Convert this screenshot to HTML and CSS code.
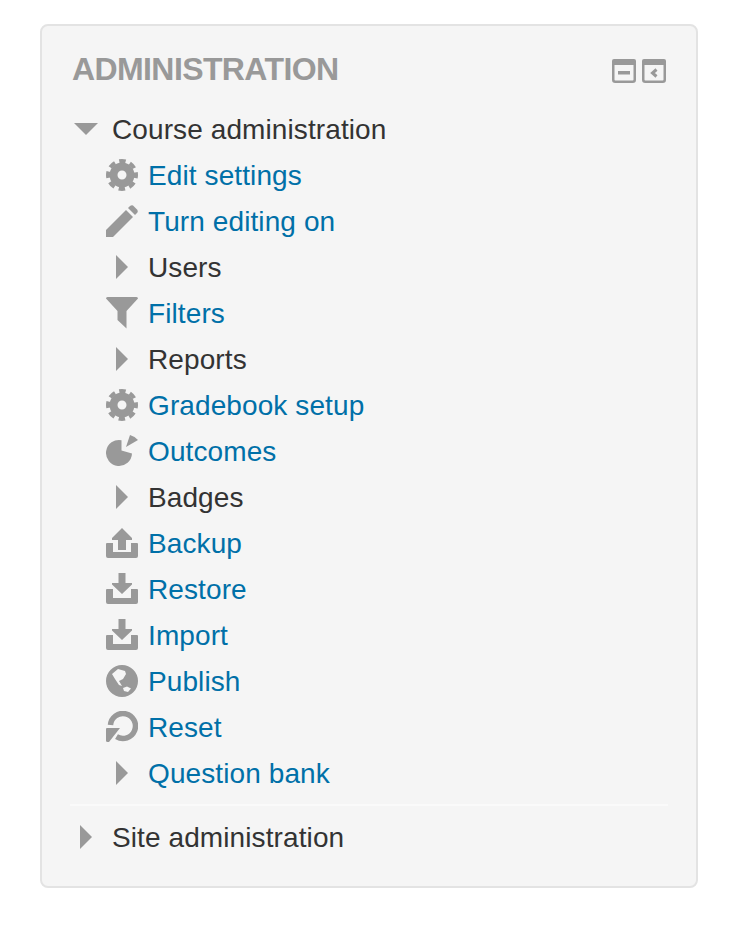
FILE: index.html
```html
<!DOCTYPE html>
<html lang="en">
<head>
    <meta charset="UTF-8">
    <meta name="viewport" content="width=device-width, initial-scale=1.0">
    <title>Administration</title>
    <link rel="stylesheet" href="styles.css">
</head>
<body>
    <svg class="defs">
        <symbol id="i-gear" viewBox="0 0 32 32">
            <circle cx="16" cy="16" r="8.500" fill="none" stroke="currentColor" stroke-width="8"/>
            <circle cx="16" cy="16" r="14" fill="none" stroke="currentColor" stroke-width="4" stroke-dasharray="6.500 4.500" stroke-dashoffset="3.250"/>
        </symbol>
        <symbol id="i-pencil" viewBox="0 0 32 32">
            <path d="M0 32V25L20 5 27 12 7 32Z"/>
            <path d="M22 3 24 1Q25.500 0 27 0.500L31 4.500Q32.500 6.500 31 8L29 10Z"/>
        </symbol>
        <symbol id="i-filter" viewBox="0 0 32 32">
            <path d="M0 1.500Q0 0 1.500 0H30.500Q32 0 32 1.500L20.500 14V31.500L11.500 23V14Z"/>
        </symbol>
        <symbol id="i-pie" viewBox="0 0 32 32">
            <path d="M15.500 5.200A13 13 0 1 0 26 18.500L15.500 15.500Z"/>
            <path d="M24 0Q29 1.500 32 5L20 12Z"/>
        </symbol>
        <symbol id="i-upload" viewBox="0 0 32 32">
            <path d="M16 1 26 11V13H20V23H12V13H6V11Z"/>
            <path d="M1 16H7V25H25V16H31Q32 16 32 17V29Q32 31 30 31H2Q0 31 0 29V17Q0 16 1 16Z"/>
        </symbol>
        <symbol id="i-download" viewBox="0 0 32 32">
            <path d="M12.500 0H19.500V10H26V11.500L16 21 6 11.500V10H12.500Z"/>
            <path d="M1 16H7V25H25V16H31Q32 16 32 17V29Q32 31 30 31H2Q0 31 0 29V17Q0 16 1 16Z"/>
        </symbol>
        <symbol id="i-globe" viewBox="0 0 32 32">
            <path fill-rule="evenodd" d="M16 0A16 16 0 1 1 16 32 16 16 0 1 1 16 0ZM6 9 12 4 19 6 20 9 17 14 13 16 16 21 13 20 9 14ZM17 23 21 21.500 25 23.500 22 27 18 26Z"/>
        </symbol>
        <symbol id="i-reset" viewBox="0 0 32 32">
            <path d="M4.500 14A12.500 12.500 0 1 1 10.500 25.700" fill="none" stroke="currentColor" stroke-width="5.500"/>
            <path d="M1 17H14L3 31H1.500Q0 31 0 29.500V18Q0 17 1 17Z"/>
        </symbol>
    </svg>

    <section class="block">
        <header class="block-head">
            <h2 class="block-title">ADMINISTRATION</h2>
            <div class="block-actions">
                <svg class="action" viewBox="0 0 24 24">
                    <rect x="1.250" y="3" width="21.500" height="19.750" rx="2" fill="none" stroke="currentColor" stroke-width="2.500"/>
                    <rect x="0" y="0" width="24" height="6" rx="2"/>
                    <rect x="6" y="12" width="12" height="3.500"/>
                </svg>
                <svg class="action" viewBox="0 0 24 24">
                    <rect x="1.250" y="3" width="21.500" height="19.750" rx="2" fill="none" stroke="currentColor" stroke-width="2.500"/>
                    <rect x="0" y="0" width="24" height="6" rx="2"/>
                    <path d="M14.500 10.500 10.500 14 14.500 17.500" fill="none" stroke="currentColor" stroke-width="3"/>
                </svg>
            </div>
        </header>

        <ul class="tree">
            <li class="node top"><span class="arrow-down"></span><span class="label">Course administration</span></li>
            <li>
                <ul class="tree sub">
                    <li class="node"><svg class="icon"><use href="#i-gear"/></svg><a class="link" href="#">Edit settings</a></li>
                    <li class="node"><svg class="icon"><use href="#i-pencil"/></svg><a class="link" href="#">Turn editing on</a></li>
                    <li class="node"><span class="arrow-right"></span><span class="label">Users</span></li>
                    <li class="node"><svg class="icon"><use href="#i-filter"/></svg><a class="link" href="#">Filters</a></li>
                    <li class="node"><span class="arrow-right"></span><span class="label">Reports</span></li>
                    <li class="node"><svg class="icon"><use href="#i-gear"/></svg><a class="link" href="#">Gradebook setup</a></li>
                    <li class="node"><svg class="icon"><use href="#i-pie"/></svg><a class="link" href="#">Outcomes</a></li>
                    <li class="node"><span class="arrow-right"></span><span class="label">Badges</span></li>
                    <li class="node"><svg class="icon"><use href="#i-upload"/></svg><a class="link" href="#">Backup</a></li>
                    <li class="node"><svg class="icon"><use href="#i-download"/></svg><a class="link" href="#">Restore</a></li>
                    <li class="node"><svg class="icon"><use href="#i-download"/></svg><a class="link" href="#">Import</a></li>
                    <li class="node"><svg class="icon"><use href="#i-globe"/></svg><a class="link" href="#">Publish</a></li>
                    <li class="node"><svg class="icon"><use href="#i-reset"/></svg><a class="link" href="#">Reset</a></li>
                    <li class="node"><span class="arrow-right"></span><a class="link" href="#">Question bank</a></li>
                </ul>
            </li>
        </ul>

        <ul class="tree site">
            <li class="node top"><span class="arrow-right"></span><span class="label">Site administration</span></li>
        </ul>
    </section>
</body>
</html>
```

FILE: styles.css
```css
body { margin: 0; background: #fff; font-family: "Liberation Sans", Arial, sans-serif; font-size: 28px; letter-spacing: 0.1px; color: #333; }
.defs { display: none; }
.block { width: 658px; box-sizing: border-box; margin: 24px 0 0 40px; padding: 23px 28px 26px; background: #f5f5f5; border: 2px solid #e3e3e3; border-radius: 8px; }
.block-head { display: flex; justify-content: space-between; align-items: center; height: 40px; padding: 0 2px; margin-bottom: 17px; }
.block-title { margin: 0; font-size: 32px; font-weight: bold; color: #999; letter-spacing: -0.6px; }
.block-actions { display: flex; gap: 6px; margin-top: 4px; }
.action { width: 24px; height: 24px; color: #999; fill: #999; }

.tree { list-style: none; margin: 0; padding: 0; }
.sub { padding-left: 36px; }
.site { margin-top: 8px; padding-top: 8px; border-top: 2px solid #fafafa; }
.node { display: flex; align-items: center; height: 46px; }
.top { padding-left: 4px; }
.icon { width: 32px; height: 32px; flex: none; margin-right: 10px; color: #999; fill: #999; }
.link { padding-top: 2px; color: #0070a8; text-decoration: none; }
.label { padding-top: 2px; color: #333; }

.arrow-right { flex: none; box-sizing: border-box; width: 12px; height: 24px; margin: 0 20px 0 10px; border-style: solid; border-width: 12px 0 12px 12px; border-color: transparent transparent transparent #999; }
.arrow-down { flex: none; box-sizing: border-box; width: 24px; height: 12px; margin-right: 14px; border-style: solid; border-width: 12px 12px 0 12px; border-color: #999 transparent transparent transparent; }
.top .arrow-right { margin: 0 20px 0 6px; }
```
